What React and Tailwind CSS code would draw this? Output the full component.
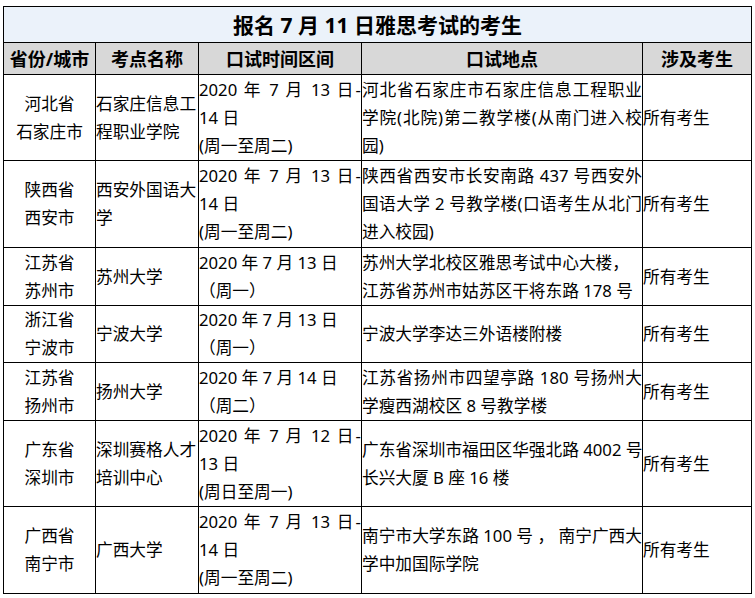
import React from 'react';

const rows = [
  {
    h: 'h-[86px]',
    city: ['河北省', '石家庄市'],
    site: ['石家庄信息工', '程职业学院'],
    time: [['2020 年 7 月 13 日-', true], ['14 日'], ['(周一至周二)']],
    addr: [['河北省石家庄市石家庄信息工程职业', true], ['学院(北院)第二教学楼(从南门进入校', true], ['园)']],
  },
  {
    h: 'h-[87px]',
    city: ['陕西省', '西安市'],
    site: ['西安外国语大', '学'],
    time: [['2020 年 7 月 13 日-', true], ['14 日'], ['(周一至周二)']],
    addr: [['陕西省西安市长安南路 437 号西安外', true], ['国语大学 2 号教学楼(口语考生从北门', true], ['进入校园)']],
  },
  {
    h: 'h-[58px]',
    city: ['江苏省', '苏州市'],
    site: ['苏州大学'],
    time: [['2020 年 7 月 13 日'], ['（周一）']],
    addr: [['苏州大学北校区雅思考试中心大楼，'], ['江苏省苏州市姑苏区干将东路 178 号']],
  },
  {
    h: 'h-[57px]',
    city: ['浙江省', '宁波市'],
    site: ['宁波大学'],
    time: [['2020 年 7 月 13 日'], ['（周一）']],
    addr: [['宁波大学李达三外语楼附楼']],
  },
  {
    h: 'h-[58px]',
    city: ['江苏省', '扬州市'],
    site: ['扬州大学'],
    time: [['2020 年 7 月 14 日'], ['（周二）']],
    addr: [['江苏省扬州市四望亭路 180 号扬州大', true], ['学瘦西湖校区 8 号教学楼']],
  },
  {
    h: 'h-[86px]',
    city: ['广东省', '深圳市'],
    site: ['深圳赛格人才', '培训中心'],
    time: [['2020 年 7 月 12 日-', true], ['13 日'], ['(周日至周一)']],
    addr: [['广东省深圳市福田区华强北路 4002 号'], ['长兴大厦 B 座 16 楼']],
  },
  {
    h: 'h-[87px]',
    city: ['广西省', '南宁市'],
    site: ['广西大学'],
    time: [['2020 年 7 月 13 日-', true], ['14 日'], ['(周一至周二)']],
    addr: [['南宁市大学东路 100 号 ， 南宁广西大', true], ['学中加国际学院']],
  },
];

function Lines({ lines }) {
  return lines.map(([text, just], i) => (
    <div
      key={i}
      className={just ? 'whitespace-nowrap text-justify [text-align-last:justify]' : 'whitespace-nowrap'}
    >
      {text}
    </div>
  ));
}

export default function App() {
  const td = 'border border-black p-0 align-middle';
  return (
    <div className="bg-white min-h-[598px] pt-[6px] pl-[3px] text-black font-['Noto_Sans','Noto_Sans_CJK_SC',sans-serif]">
      <table className="table-fixed border-collapse w-[748px] text-[16.7px] leading-[28px]">
        <colgroup>
          <col className="w-[92px]" />
          <col className="w-[103px]" />
          <col className="w-[163px]" />
          <col className="w-[281px]" />
          <col className="w-[109px]" />
        </colgroup>
        <thead>
          <tr className="h-[36px]">
            <th colSpan={5} className={`${td} bg-[#ebf2fa] text-[21px] font-bold text-center`}>
              报名 7 月 11 日雅思考试的考生
            </th>
          </tr>
          <tr className="h-[32px] bg-[#d8d8d8] text-[18px] font-bold">
            <th className={`${td} text-center`}>省份/城市</th>
            <th className={`${td} text-center`}>考点名称</th>
            <th className={`${td} text-center`}>口试时间区间</th>
            <th className={`${td} text-center`}>口试地点</th>
            <th className={`${td} text-center`}>涉及考生</th>
          </tr>
        </thead>
        <tbody>
          {rows.map((r, i) => (
            <tr key={i} className={r.h}>
              <td className={`${td} text-center`}>
                {r.city.map((c) => (
                  <div key={c}>{c}</div>
                ))}
              </td>
              <td className={`${td} text-left`}>
                {r.site.map((s) => (
                  <div key={s} className="whitespace-nowrap">{s}</div>
                ))}
              </td>
              <td className={`${td} text-left`}>
                <Lines lines={r.time} />
              </td>
              <td className={`${td} text-left`}>
                <Lines lines={r.addr} />
              </td>
              <td className={`${td} text-left`}>所有考生</td>
            </tr>
          ))}
        </tbody>
      </table>
    </div>
  );
}
